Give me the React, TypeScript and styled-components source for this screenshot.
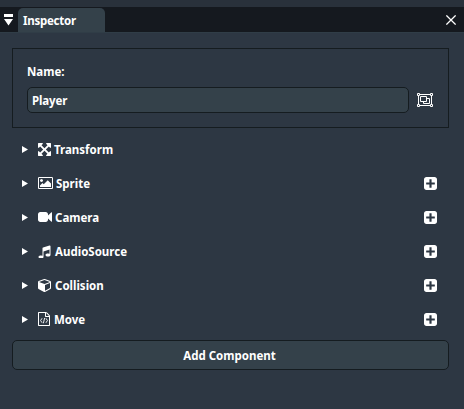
import React from 'react';
import styled, { createGlobalStyle } from 'styled-components';

const GlobalStyle = createGlobalStyle`
  * { box-sizing: border-box; }
  html, body { margin: 0; height: 100%; overflow: hidden; background: #2d3743; }
  body, button, input { font: 700 11.5px/17px "Noto Sans", "Open Sans", sans-serif; color: #fff; }
`;

const Window = styled.main`
  display: flex;
  flex-direction: column;
  height: 409px;
  width: 464px;
  background: #2d3743;
`;

const TopStrip = styled.div`
  height: 7px;
  background: #29313b;
`;

const TabBar = styled.header`
  display: flex;
  align-items: stretch;
  height: 26px;
  background: #15191f;
  border-bottom: 1px solid #303d47;
`;

const MenuButton = styled.button`
  display: flex;
  width: 18px;
  padding: 7px 0 0 4px;
  border: 0;
  background: none;
`;

const Tab = styled.div`
  width: 87px;
  margin-top: 1px;
  padding: 4px 0 0 5px;
  border-radius: 5px 5px 0 0;
  background: #34414a;
  letter-spacing: -0.25px;
`;

const CloseButton = styled.button`
  display: flex;
  margin-left: auto;
  padding: 8px 8px 0 0;
  border: 0;
  background: none;
`;

const Content = styled.div`
  display: flex;
  flex-direction: column;
  padding: 15px 15px 0 12px;
`;

const NamePanel = styled.section`
  height: 80px;
  padding: 14px 15px 0 14px;
  border: 1px solid #151c20;
`;

const NameRow = styled.div`
  display: flex;
  align-items: center;
  gap: 8px;
  margin-top: 7px;
`;

const NameInput = styled.input`
  width: 382px;
  height: 26px;
  padding: 1px 4px 0;
  border: 1px solid #151c20;
  border-radius: 5px;
  outline: none;
  background: #34414a;
  letter-spacing: -0.15px;
`;

const ComponentList = styled.ul`
  margin: 4px 0 0;
  padding: 0;
  list-style: none;
`;

const ComponentRow = styled.li`
  display: flex;
  align-items: center;
  height: 34px;
  padding: 0 12px 0 10px;
`;

const Disclosure = styled.svg`
  width: 6px;
  height: 7px;
  margin-right: 10px;
  fill: #fff;
`;

const Glyph = styled.svg`
  display: block;
  flex: none;
  fill: #fff;
`;

const Label = styled.span<{ $gap: number }>`
  flex: 1;
  margin-left: ${(p) => p.$gap}px;
  padding-top: 1px;
`;

const AddButton = styled.button`
  height: 30px;
  margin-top: 4px;
  padding: 1px 2px 0 0;
  border: 1px solid #151c20;
  border-radius: 5px;
  background: #34414a;
`;

const PLUS =
  'M1408 960v-128q0-26-19-45t-45-19h-320v-320q0-26-19-45t-45-19h-128q-26 0-45 19t-19 45v320h-320q-26 0-45 19t-19 45v128q0 26 19 45t45 19h320v320q0 26 19 45t45 19h128q26 0 45-19t19-45v-320h320q26 0 45-19t19-45zm256-544v960q0 119-84.5 203.5t-203.5 84.5h-960q-119 0-203.5-84.5t-84.5-203.5v-960q0-119 84.5-203.5t203.5-84.5h960q119 0 203.5 84.5t84.5 203.5z';

interface Item {
  name: string;
  w: number;
  h: number;
  box: string;
  path: string;
  gap: number;
  code?: boolean;
  fixed?: boolean;
}

const items: Item[] = [
  {
    name: 'Transform', w: 13, h: 13, box: '128 128 1536 1536', gap: 3, fixed: true,
    path: 'M1411 541l-355 355 355 355 144-144q29-31 70-14 39 17 39 59v448q0 26-19 45t-45 19h-448q-42 0-59-40-17-39 14-69l144-144-355-355-355 355 144 144q31 30 14 69-17 40-59 40h-448q-26 0-45-19t-19-45v-448q0-42 40-59 39-17 69 14l144 144 355-355-355-355-144 144q-19 19-45 19-12 0-24-5-40-17-40-59v-448q0-26 19-45t45-19h448q42 0 59 40 17 39-14 69l-144 144 355 355 355-355-144-144q-31-30-14-69 17-40 59-40h448q26 0 45 19t19 45v448q0 42-39 59-13 5-25 5-26 0-45-19z',
  },
  {
    name: 'Sprite', w: 15, h: 12, box: '-64 128 1920 1536', gap: 3,
    path: 'M576 576q0 80-56 136t-136 56-136-56-56-136 56-136 136-56 136 56 56 136zm1024 384v448h-1408v-192l320-320 160 160 512-512zm96-704h-1600q-13 0-22.5 9.5t-9.5 22.5v1216q0 13 9.5 22.5t22.5 9.5h1600q13 0 22.5-9.5t9.5-22.5v-1216q0-13-9.5-22.5t-22.5-9.5zm160 32v1216q0 66-47 113t-113 47h-1600q-66 0-113-47t-47-113v-1216q0-66 47-113t113-47h1600q66 0 113 47t47 113z',
  },
  {
    name: 'Camera', w: 14, h: 10, box: '0 256 1792 1280', gap: 3,
    path: 'M1792 352v1088q0 42-39 59-13 5-25 5-27 0-45-19l-403-403v166q0 119-84.5 203.5t-203.5 84.5h-704q-119 0-203.5-84.5t-84.5-203.5v-704q0-119 84.5-203.5t203.5-84.5h704q119 0 203.5 84.5t84.5 203.5v165l403-402q18-19 45-19 12 0 25 5 39 17 39 59z',
  },
  {
    name: 'AudioSource', w: 13, h: 13, box: '64 64 1664 1664', gap: 4,
    path: 'M1664 224v1120q0 50-34 89t-86 60.5-103.5 32-96.5 10.5-96.5-10.5-103.5-32-86-60.5-34-89 34-89 86-60.5 103.5-32 96.5-10.5q105 0 192 39v-537l-768 237v709q0 50-34 89t-86 60.5-103.5 32-96.5 10.5-96.5-10.5-103.5-32-86-60.5-34-89 34-89 86-60.5 103.5-32 96.5-10.5q105 0 192 39v-967q0-31 19-56.5t49-35.5l832-256q12-4 28-4 40 0 68 28t28 68z',
  },
  {
    name: 'Collision', w: 13, h: 13, box: '0 124 1664 1664', gap: 4,
    path: 'M896 1629l640-349v-636l-640 233v752zm-64-865l698-254-698-254-698 254zm832-252v768q0 35-18 65t-49 47l-704 384q-28 16-61 16t-61-16l-704-384q-31-17-49-47t-18-65v-768q0-40 23-73t61-47l704-256q22-8 44-8t44 8l704 256q38 14 61 47t23 73z',
  },
  {
    name: 'Move', w: 12, h: 14, box: '128 0 1536 1792', gap: 4, code: true,
    path: 'M1596 380q28 28 48 76t20 88v1152q0 40-28 68t-68 28h-1344q-40 0-68-28t-28-68v-1600q0-40 28-68t68-28h896q40 0 88 20t76 48zm-444-244v376h376q-10-29-22-41l-313-313q-12-12-41-22zm384 1528v-1024h-416q-40 0-68-28t-28-68v-416h-768v1536h1280z',
  },
];

export default function App() {
  return (
    <>
      <GlobalStyle />
      <Window>
        <TopStrip />
        <TabBar>
          <MenuButton aria-label="Dock menu">
            <Glyph width="9" height="12" viewBox="0 0 9 12">
              <path d="M0 0h9v3H0zM0 5h9L4.5 11.5z" />
            </Glyph>
          </MenuButton>
          <Tab>Inspector</Tab>
          <CloseButton aria-label="Close">
            <Glyph width="10" height="10" viewBox="0 0 10 10">
              <path d="M.4.4l9.2 9.2M9.6.4L.4 9.6" stroke="#fff" strokeWidth="1.25" />
            </Glyph>
          </CloseButton>
        </TabBar>
        <Content>
          <NamePanel>
            <div>Name:</div>
            <NameRow>
              <NameInput defaultValue="Player" aria-label="Name" />
              <Glyph width="16" height="14" viewBox="0 0 16 14">
                <path
                  d="M3 1.5h10M3 12.5h10M1.5 3v8M14.5 3v8M.5.5h2v2h-2zM13.5.5h2v2h-2zM.5 11.5h2v2h-2zM13.5 11.5h2v2h-2zM3.5 3.5h6v5h-6zM10 5.5h2.5v5h-6V9"
                  fill="none"
                  stroke="#fff"
                />
              </Glyph>
            </NameRow>
          </NamePanel>
          <ComponentList>
            {items.map((item) => (
              <ComponentRow key={item.name}>
                <Disclosure viewBox="0 0 6 7"><path d="M0 0l6 3.5L0 7z" /></Disclosure>
                <Glyph width={item.w} height={item.h} viewBox={item.box}>
                  <path d={item.path} />
                  {item.code && (
                    <path d="M650 800L460 1090l190 290M1142 800l190 290-190 290M980 760L812 1440" fill="none" stroke="#fff" strokeWidth="115" />
                  )}
                </Glyph>
                <Label $gap={item.gap}>{item.name}</Label>
                {!item.fixed && (
                  <Glyph width="13" height="13" viewBox="128 128 1536 1536"><path d={PLUS} /></Glyph>
                )}
              </ComponentRow>
            ))}
          </ComponentList>
          <AddButton>Add Component</AddButton>
        </Content>
      </Window>
    </>
  );
}
